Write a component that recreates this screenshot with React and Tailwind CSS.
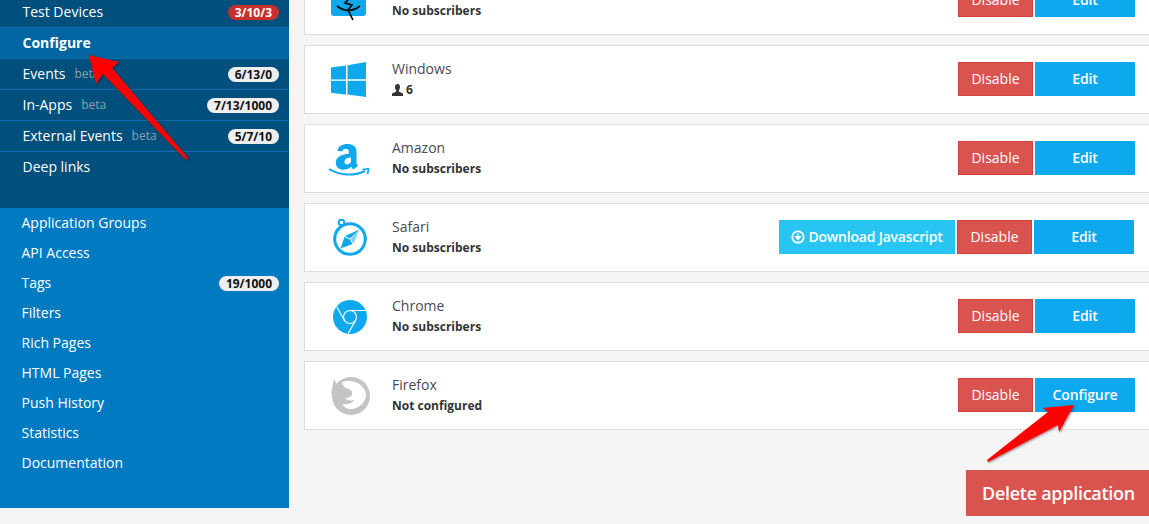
import React from 'react';

const submenu = [
  { label: 'Test Devices', badge: '3/10/3', red: true },
  { label: 'Configure', active: true },
  { label: 'Events', beta: true, badge: '6/13/0' },
  { label: 'In-Apps', beta: true, badge: '7/13/1000' },
  { label: 'External Events', beta: true, badge: '5/7/10' },
  { label: 'Deep links', last: true },
];

const menu = ['Application Groups', 'API Access', 'Tags', 'Filters', 'Rich Pages', 'HTML Pages', 'Push History', 'Statistics', 'Documentation'];

const AppleIcon = () => (
  <svg width="36" height="20" viewBox="0 0 36 20" className="block">
    <path d="M0 -10h35v23a3 3 0 0 1-3 3H3a3 3 0 0 1-3-3z" fill="#0ea8ef" />
    <path d="M6 6c4 3 8 4.500 11.500 4.500S25 9 29 6M17 0l-3 3 7 2-4 5 5 10" fill="none" stroke="#000" strokeWidth="1.600" />
  </svg>
);

const WindowsIcon = () => (
  <svg width="36" height="36" viewBox="0 0 36 36" fill="#0ea8ef" className="block">
    <path d="M0 5.500l15-2v14H0zM16.500 3.300L35 0v17.200H16.500zM0 18.800h15v14l-15-2zM16.500 18.800H35V35l-18.500-2.500z" />
  </svg>
);

const AmazonIcon = () => (
  <svg width="42" height="36" viewBox="0 0 42 36" fill="none" className="block">
    <path d="M9.500 10c.8-5 4.500-7 9.500-7 6 0 9.500 2.500 9.500 7.500v11c0 1.500.7 2.300 1.500 3.300l-4.500 3.700c-1-1-1.700-1.800-2.200-2.800-5 5-15.500 4-15.500-4 0-6.500 7-8.500 13-9v-2c0-2-1.200-3-3-3-1.700 0-3 .8-3.400 2.500zM23 16.500c-3.500.2-6.500 1.300-6.500 4.500 0 3.500 5 3.300 6.500-.2z" fill="#0ea8ef" fillRule="evenodd" />
    <path d="M1 28c11 7 26 7 36 2" stroke="#0ea8ef" strokeWidth="2" />
    <path d="M34.500 28.500l6-.8-.8 5.500" stroke="#0ea8ef" strokeWidth="1.600" />
  </svg>
);

const SafariIcon = () => (
  <svg width="36" height="40" viewBox="0 0 36 40" fill="none" className="block">
    <circle cx="18" cy="21" r="15.300" stroke="#0ea8ef" strokeWidth="3" />
    <circle cx="9.500" cy="4.500" r="2.800" stroke="#0ea8ef" strokeWidth="2" />
    <path d="M27.500 11.500L13 18l5 2.500z" fill="#0ea8ef" />
    <path d="M27.500 11.500L21.500 25.500l-3-4.500z" fill="#0ea8ef" fillOpacity="0.55" />
    <path d="M8.500 30.500L12.500 19l5.500 2.500 2.500 4.500z" fill="#0ea8ef" />
  </svg>
);

const ChromeIcon = () => (
  <svg width="34" height="34" viewBox="0 0 34 34" fill="none" className="block">
    <circle cx="17" cy="17" r="17" fill="#0ea8ef" />
    <circle cx="17" cy="17" r="6.500" stroke="#fff" strokeWidth="1.200" />
    <path d="M17 10.500h15.500M11.300 20L3.800 7M22.800 20L15 33.700" stroke="#fff" strokeWidth="1.200" />
  </svg>
);

const FirefoxIcon = () => (
  <svg width="40" height="40" viewBox="0 0 40 40" className="block">
    <circle cx="21" cy="20" r="19" fill="#c4c4c4" />
    <path d="M4 3l3 6 5 1-4 5-7 3z" fill="#c4c4c4" />
    <path d="M12 6C20 3 33 6 36 17 37 25 30 33 20 33 17 33 14 31 12 28 17 29 22 28 24 24 20 25 17 24 15 22 19 22 23 20 22 16 21 13 18 13 16 12 14 11 12 9 12 6z" fill="#fff" />
  </svg>
);

const PersonIcon = () => (
  <svg width="11" height="12" viewBox="0 0 11 12" fill="#333">
    <path d="M3 3c0-2 1-3 2.500-3S8 1 8 3c0 1.500-.7 2.800-1.200 3.500v1L11 9.500V12H0V9.500l4.200-2v-1C3.700 5.800 3 4.500 3 3z" />
  </svg>
);

const apps = [
  { name: 'Mac', sub: 'No subscribers', icon: <AppleIcon />, iconClass: 'self-start mt-[19px]' },
  { name: 'Windows', sub: '6', count: true, icon: <WindowsIcon /> },
  { name: 'Amazon', sub: 'No subscribers', icon: <AmazonIcon /> },
  { name: 'Safari', sub: 'No subscribers', icon: <SafariIcon />, iconClass: 'ml-[3px]', download: true },
  { name: 'Chrome', sub: 'No subscribers', icon: <ChromeIcon />, iconClass: 'ml-[2px]' },
  { name: 'Firefox', sub: 'Not configured', icon: <FirefoxIcon />, iconClass: 'ml-[3px]', action: 'Configure' },
];

const Badge = ({ children, red }) => (
  <span className={`mt-[2px] rounded-full px-[7px] h-[15px] leading-[15px] text-[12px] font-bold ${red ? 'bg-[#c9302c] text-white' : 'bg-[#eeeeee] text-[#111]'}`}>
    {children}
  </span>
);

const Sidebar = () => (
  <aside className="w-[289px] shrink-0 bg-[#007ac0] text-white h-[511px] -mt-[3px]">
    <div className="bg-[#004f7c] h-[211px]">
      {submenu.map(item => (
        <div
          key={item.label}
          className={`flex items-center h-[31px] pl-[22.5px] pr-[10px] pb-[2px] text-[14px] ${item.last ? '' : 'border-b border-[#0a6cae]'} ${item.active ? 'bg-[#0065a0] font-bold' : ''}`}
        >
          <span>{item.label}</span>
          {item.beta && <span className="ml-[9px] mt-[2px] text-[12px] text-[#8aa0b0]">beta</span>}
          <span className="flex-1" />
          {item.badge && <Badge red={item.red}>{item.badge}</Badge>}
        </div>
      ))}
    </div>
    <div>
      {menu.map(label => (
        <div key={label} className="flex items-center h-[30px] pl-[21.5px] pr-[10px] pb-[2px] text-[14px]">
          <span>{label}</span>
          <span className="flex-1" />
          {label === 'Tags' && <Badge>19/1000</Badge>}
        </div>
      ))}
    </div>
  </aside>
);

const AppRow = ({ app }) => (
  <div className={`flex items-center h-[69px] bg-white border border-[#dddddd] border-r-0 ${app.download ? 'pr-[15px]' : 'pr-[14px]'}`}>
    <div className="w-[87px] flex justify-center shrink-0">
      <div className={app.iconClass}>{app.icon}</div>
    </div>
    <div className="flex-1 text-[14px] leading-[20px]">
      <div className="text-[#4a4a55]">{app.name}</div>
      <div className="mt-[1px] text-[12px] font-bold text-[#333] flex items-center gap-[3px]">
        {app.count && <PersonIcon />}
        {app.sub}
      </div>
    </div>
    {app.download && (
      <button className="h-[34px] w-[176px] -mt-[2px] mr-[2px] bg-[#29c5f2] text-white text-[14px] font-semibold tracking-[-0.2px] flex items-center justify-center gap-[3px]">
        <svg width="14" height="14" viewBox="0 0 14 14" fill="none" stroke="#fff">
          <circle cx="7" cy="7" r="5.700" strokeWidth="1.800" />
          <path d="M7 3.500v3.500M4.500 6.500L7 9.800l2.500-3.300z" fill="#fff" strokeWidth="1.200" />
        </svg>
        Download Javascript
      </button>
    )}
    <button className="h-[34px] w-[75px] -mt-[2px] mr-[2px] bg-[#d9534f] border border-[#d43f3a] text-white text-[14px]">Disable</button>
    <button className="h-[34px] w-[100px] -mt-[2px] bg-[#0ea8ef] text-white text-[14px] font-semibold tracking-[-0.1px]">{app.action || 'Edit'}</button>
  </div>
);

const App = () => (
  <div className="relative h-[524px] w-[1149px] overflow-hidden bg-[#f5f5f5] font-['Open_Sans',sans-serif]">
    <div className="flex items-start">
      <Sidebar />
      <main className="flex-1 pl-[15px] -mt-[34px]">
        <div className="flex flex-col gap-[10px]">
          {apps.map(app => <AppRow key={app.name} app={app} />)}
        </div>
        <div className="flex justify-end mt-[40px]">
          <button className="h-[46px] w-[183px] pl-[2px] bg-[#d9534f] text-white text-[18px] font-semibold tracking-[-0.28px]">Delete application</button>
        </div>
      </main>
    </div>

    {/* annotation arrows */}
    <svg className="absolute left-0 top-0 pointer-events-none" width="1149" height="524" viewBox="0 0 1149 524">
      <defs>
        <filter id="arrowShadow" x="-20%" y="-20%" width="140%" height="140%">
          <feDropShadow dx="1" dy="1" stdDeviation="1" floodColor="#000" floodOpacity="0.45" />
        </filter>
      </defs>
      <path d="M89 55L119 62 112 68 188 158 186 160 103 74 96 84z" fill="#ff0000" filter="url(#arrowShadow)" />
      <path d="M1074 405L1059 432 1058 425 988 462 987 460 1048 412 1043 408z" fill="#ff0000" filter="url(#arrowShadow)" />
    </svg>
  </div>
);

export default App;
